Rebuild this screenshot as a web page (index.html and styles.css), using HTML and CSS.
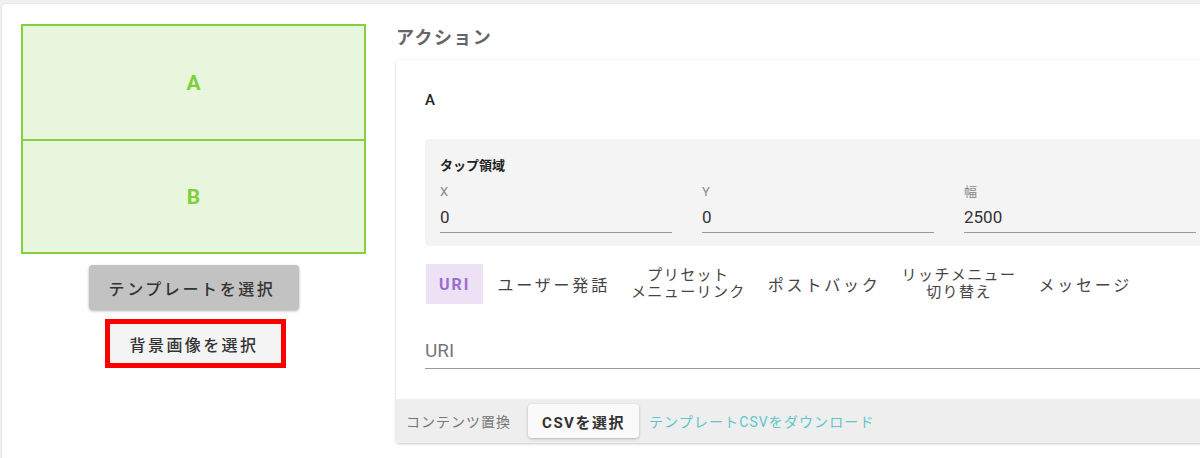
FILE: index.html
```html
<!DOCTYPE html>
<html lang="ja">
<head>
<meta charset="utf-8">
<link rel="stylesheet" href="styles.css">
</head>
<body>
<div class="page">
  <div class="left">
    <div class="canvas">
      <div class="area area-a">A</div>
      <div class="area area-b">B</div>
    </div>
    <button class="template-btn">テンプレートを選択</button>
    <div class="bg-frame"><button class="bg-btn">背景画像を選択</button></div>
  </div>
  <div class="right">
    <h2 class="heading">アクション</h2>
    <div class="card">
      <div class="card-body">
        <div class="card-title">A</div>
        <div class="panel">
          <div class="panel-title">タップ領域</div>
          <div class="fields">
            <div class="field"><div class="label">X</div><div class="value">0</div></div>
            <div class="field"><div class="label">Y</div><div class="value">0</div></div>
            <div class="field"><div class="label">幅</div><div class="value">2500</div></div>
          </div>
        </div>
        <div class="tabs">
          <div class="tab active">URI</div>
          <div class="tab">ユーザー発話</div>
          <div class="tab two">プリセット<br>メニューリンク</div>
          <div class="tab">ポストバック</div>
          <div class="tab two">リッチメニュー<br>切り替え</div>
          <div class="tab">メッセージ</div>
        </div>
        <div class="uri-input">URI</div>
      </div>
      <div class="bar">
        <span class="bar-label">コンテンツ置換</span>
        <button class="csv-btn">CSVを選択</button>
        <span class="csv-link">テンプレートCSVをダウンロード</span>
      </div>
    </div>
  </div>
</div>
</body>
</html>
```

FILE: styles.css
```css
* { box-sizing: border-box; }
html, body { margin: 0; padding: 0; }
body {
  background: #f0f0f0;
  width: 1200px;
  height: 458px;
  overflow: hidden;
  font-family: Roboto, "Noto Sans CJK JP", sans-serif;
  color: #333;
}
button { font-family: inherit; border: none; cursor: pointer; }
.page {
  margin: 4px 0 0 2px;
  width: 1260px;
  height: 470px;
  background: #fff;
  border-radius: 4px;
  box-shadow: 0 0 2px rgba(0,0,0,0.12);
  display: flex;
  gap: 30px;
  padding: 20px 0 0 19px;
}
.left {
  width: 345px;
  flex: none;
  display: flex;
  flex-direction: column;
  align-items: center;
}
.canvas {
  width: 345px;
  height: 230px;
  border: 2px solid #84d13d;
  background: #e9f6de;
  display: flex;
  flex-direction: column;
}
.area {
  display: flex;
  align-items: center;
  justify-content: center;
  color: #7fcf3b;
  font-weight: 700;
  font-size: 21px;
}
.area-a { height: 115px; border-bottom: 2px solid #84d13d; }
.area-b { flex: 1; }
.template-btn {
  margin-top: 11px;
  width: 210px;
  height: 45px;
  background: #c2c2c2;
  border-radius: 4px;
  box-shadow: 0 1px 3px rgba(0,0,0,0.3);
  font-size: 16px;
  letter-spacing: 2.6px;
  padding-left: 3px;
  color: #333;
  font-weight: 500;
}
.bg-frame {
  margin-top: 9px;
  margin-left: 4px;
  width: 181px;
  height: 49px;
  border: 5px solid #ff0000;
  display: flex;
}
.bg-btn {
  flex: 1;
  background: #f4f4f4;
  font-size: 16px;
  letter-spacing: 2.4px;
  padding-left: 3px;
  color: #333;
  font-weight: 500;
}
.right {
  width: 830px;
  flex: none;
  display: flex;
  flex-direction: column;
}
.heading {
  margin: 0;
  height: 28px;
  line-height: 28px;
  font-size: 18px;
  font-weight: 700;
  letter-spacing: 1.4px;
  color: #666;
}
.card {
  margin-top: 8px;
  height: 383px;
  border-radius: 4px;
  background: #fff;
  box-shadow: 0 1px 3px rgba(0,0,0,0.22);
  overflow: hidden;
  display: flex;
  flex-direction: column;
}
.card-body {
  flex: 1;
  padding: 0 15px 0 29px;
}
.card-title {
  margin-top: 30px;
  line-height: 20px;
  font-size: 15px;
  font-weight: 500;
  color: #222;
}
.panel {
  margin-top: 29px;
  background: #f4f4f4;
  border-radius: 4px;
  padding: 18px 15px 13px;
}
.panel-title {
  font-size: 13px;
  font-weight: 700;
  line-height: 18px;
  color: #222;
}
.fields {
  margin-top: 8px;
  display: flex;
  gap: 30px;
}
.field {
  width: 232px;
  border-bottom: 1px solid #9a9a9a;
  padding-bottom: 3px;
}
.label {
  font-size: 13px;
  line-height: 18px;
  color: #888;
}
.value {
  margin-top: 4px;
  font-size: 17px;
  line-height: 24px;
  color: #333;
}
.tabs {
  margin-top: 18px;
  margin-left: 1px;
  display: flex;
  height: 40px;
}
.tab {
  padding: 0 11px 0 14px;
  display: flex;
  align-items: center;
  justify-content: center;
  text-align: center;
  font-size: 16px;
  letter-spacing: 2.8px;
  color: #444;
  white-space: nowrap;
}
.tab.two {
  font-size: 15px;
  letter-spacing: 1.4px;
  line-height: 17px;
  padding: 0 8px 0 10px;
}
.tab.active {
  background: #ede1f6;
  color: #9b6cd0;
  font-weight: 700;
  font-size: 16px;
  letter-spacing: 2px;
  padding: 0 13px 0 13px;
}
.uri-input {
  margin-top: 35px;
  font-size: 19px;
  line-height: 24px;
  padding-bottom: 5px;
  color: #777;
  border-bottom: 1px solid #9a9a9a;
  margin-right: -20px;
}
.bar {
  height: 44px;
  flex: none;
  background: #eeeeee;
  display: flex;
  align-items: center;
  padding-left: 10px;
}
.bar-label {
  font-size: 14px;
  letter-spacing: 1px;
  color: #777;
}
.csv-btn {
  margin-left: 17px;
  width: 111px;
  height: 34px;
  background: #fafafa;
  border-radius: 4px;
  box-shadow: 0 1px 3px rgba(0,0,0,0.25);
  font-size: 15px;
  font-weight: 700;
  letter-spacing: 1.5px;
  color: #333;
}
.csv-link {
  margin-left: 10px;
  font-size: 14px;
  letter-spacing: 1.1px;
  color: #5ec6c8;
}
```
